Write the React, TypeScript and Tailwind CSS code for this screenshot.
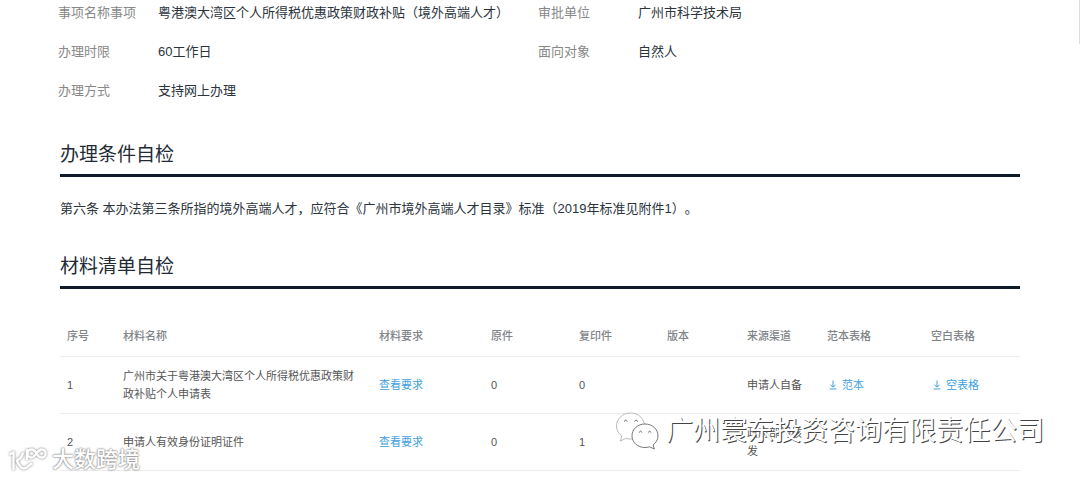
import type { ReactNode } from 'react';

const info = [
  { label: '事项名称事项', value: '粤港澳大湾区个人所得税优惠政策财政补贴（境外高端人才）' },
  { label: '审批单位', value: '广州市科学技术局' },
  { label: '办理时限', value: '60工作日' },
  { label: '面向对象', value: '自然人' },
  { label: '办理方式', value: '支持网上办理' },
];

const headers = [
  '序号',
  '材料名称',
  '材料要求',
  '原件',
  '复印件',
  '版本',
  '来源渠道',
  '范本表格',
  '空白表格',
];

const materials = [
  {
    id: 1,
    name: '广州市关于粤港澳大湾区个人所得税优惠政策财政补贴个人申请表',
    original: 0,
    copy: 0,
    source: '申请人自备',
    hasForms: true,
  },
  {
    id: 2,
    name: '申请人有效身份证明证件',
    original: 0,
    copy: 1,
    source: '政府部门核发',
    hasForms: false,
  },
];

function SectionTitle({ children }: { children: ReactNode }) {
  return (
    <h2 className="border-b-3 border-[#101b2a] pb-[5px] text-[19px] leading-7 text-[#222b35]">
      {children}
    </h2>
  );
}

function DownloadLink({ children }: { children: ReactNode }) {
  return (
    <a href="#download" className="flex items-center gap-[5px] pl-[2px] text-[#409fdf]">
      <svg
        viewBox="0 0 8 10"
        className="h-[10px] w-2"
        fill="none"
        stroke="currentColor"
        strokeWidth="1"
      >
        <path d="M4 0.5V7M1.5 4.7L4 7.2L6.5 4.7M0.8 9H7.2" />
      </svg>
      {children}
    </a>
  );
}

function WechatIcon() {
  return (
    <svg viewBox="0 0 44 38" className="h-[38px] w-11" fill="#fff">
      <path
        d="M15.500 1C7.500 1 1.500 6.800 1.500 14c0 4.200 2 7.500 5.300 9.900L5.500 29l5.200-2.600c1.600.4 3.100.6 4.800.6 8 0 14-5.800 14-13s-6-13-14-13z"
        stroke="#aaa"
        strokeWidth="0.8"
      />
      <path
        d="M30 12c-7.400 0-13 5.200-13 11.800s5.600 11.700 13 11.700c1.600 0 3-.2 4.500-.7l4.900 2.200-1.400-4c3-2.200 5-5.400 5-9.200C43 17.200 37.400 12 30 12z"
        stroke="#555"
        strokeWidth="0.8"
      />
      <path
        d="M9 9.500q1.700-2.800 3.400 0M19.500 9.500q1.700-2.800 3.400 0M24 20.500q1.600-2.800 3.200 0M33 20.500q1.600-2.800 3.200 0"
        fill="none"
        stroke="#555"
        strokeWidth="0.9"
      />
    </svg>
  );
}

function BrandIcon() {
  return (
    <svg
      viewBox="0 0 42 28"
      className="h-7 w-[42px] drop-shadow-[0_0_1px_#777]"
      fill="none"
      stroke="#fff"
      strokeWidth="2.400"
    >
      <path d="M1.500 8.500L5.500 6.500V24" />
      <path d="M15 6.500C14.500 10 12.500 12.500 9 14.500C10.500 18 12 22.500 16 22.500C19.500 22.500 20.500 18.500 24.500 17.500" />
      <path d="M19 14V3" />
      <path d="M28.500 7.500C27 4.800 25.600 3.500 23.500 3.500A4 4 0 1 0 23.500 11.500C27.800 11.500 29 3.500 33.700 3.500A4 4 0 1 1 33.700 11.500C31.500 11.500 30 10.200 28.500 7.500" />
    </svg>
  );
}

export default function App() {
  return (
    <div className="relative min-h-screen overflow-hidden bg-white pb-2 font-['Liberation_Sans','Noto_Sans_CJK_SC',sans-serif]">
      <dl className="grid grid-cols-2 gap-y-[19px] pt-[3px] pr-[62px] pl-[58px] text-[13px] leading-5">
        {info.map((item) => (
          <div key={item.label} className="flex">
            <dt className="w-[100px] shrink-0 text-[#888]">{item.label}</dt>
            <dd className="whitespace-nowrap text-[#2b333c]">{item.value}</dd>
          </div>
        ))}
      </dl>

      <main className="px-15">
        <section className="mt-10">
          <SectionTitle>办理条件自检</SectionTitle>
          <p className="mt-[22px] text-[13px] leading-5 text-[#2b333c] [text-spacing-trim:space-all]">
            第六条 本办法第三条所指的境外高端人才，应符合《广州市境外高端人才目录》标准（2019年标准见附件1）。
          </p>
        </section>

        <section className="mt-[34px]">
          <SectionTitle>材料清单自检</SectionTitle>
          <table className="mt-7 w-full table-fixed text-left text-[11px] leading-[18px] text-[#555]">
            <colgroup>
              <col className="w-[56px]" />
              <col className="w-[256px]" />
              <col className="w-[112px]" />
              <col className="w-[88px]" />
              <col className="w-[88px]" />
              <col className="w-[80px]" />
              <col className="w-[80px]" />
              <col className="w-[104px]" />
              <col />
            </colgroup>
            <thead>
              <tr className="h-[39px] border-b border-[#ececec] text-[#808488]">
                {headers.map((header) => (
                  <th key={header} className="pr-2 pl-[7px] font-medium">
                    {header}
                  </th>
                ))}
              </tr>
            </thead>
            <tbody>
              {materials.map((row) => (
                <tr
                  key={row.id}
                  className="h-[57px] border-b border-[#ececec] *:pr-2 *:pl-[7px]"
                >
                  <td>{row.id}</td>
                  <td>{row.name}</td>
                  <td>
                    <a href="#requirement" className="text-[#409fdf]">
                      查看要求
                    </a>
                  </td>
                  <td>{row.original}</td>
                  <td>{row.copy}</td>
                  <td />
                  <td>{row.source}</td>
                  <td>{row.hasForms && <DownloadLink>范本</DownloadLink>}</td>
                  <td>{row.hasForms && <DownloadLink>空表格</DownloadLink>}</td>
                </tr>
              ))}
            </tbody>
          </table>
        </section>
      </main>

      {/* scrollbar thumb */}
      <div className="absolute top-0 right-0 h-11 w-px bg-[#ddd]" />

      {/* watermarks */}
      <div className="absolute top-[411px] right-9 flex items-center gap-[7px]">
        <WechatIcon />
        <span className="text-[27px] leading-10 whitespace-nowrap text-white [text-shadow:1px_1px_0_#444]">
          广州寰东投资咨询有限责任公司
        </span>
      </div>
      <div className="absolute top-[444px] left-2 flex items-center gap-[2px]">
        <BrandIcon />
        <span className="text-[22px] leading-8 font-medium text-white [text-shadow:0_0_2px_#777,0_0_2px_#999]">
          大数跨境
        </span>
      </div>
    </div>
  );
}
